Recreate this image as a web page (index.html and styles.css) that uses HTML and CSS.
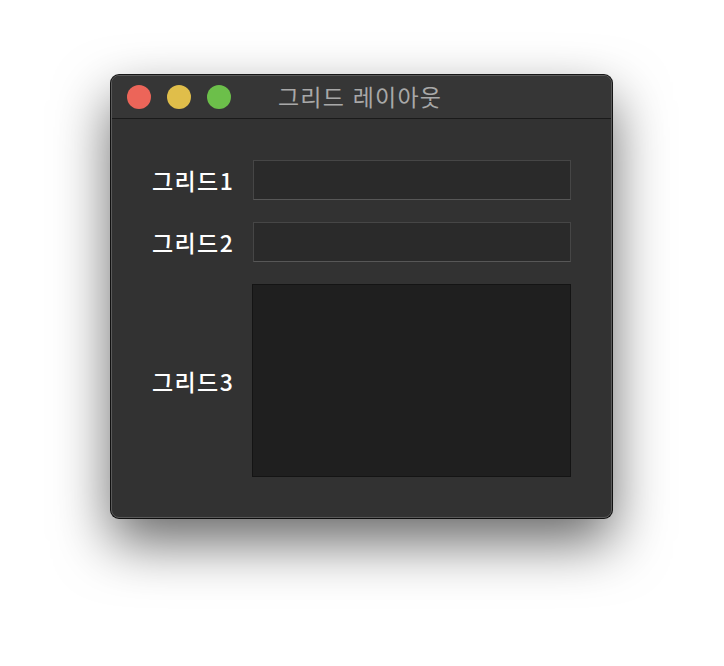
FILE: index.html
```html
<!DOCTYPE html>
<html lang="ko">
<head>
    <meta charset="UTF-8">
    <title>그리드 레이아웃</title>
    <link rel="stylesheet" href="styles.css">
</head>
<body>
    <div class="window">
        <div class="titlebar">
            <div class="lights">
                <span class="light red"></span>
                <span class="light yellow"></span>
                <span class="light green"></span>
            </div>
            <div class="title">그리드 레이아웃</div>
        </div>
        <div class="content">
            <label class="label">그리드1</label>
            <input class="field" type="text">
            <label class="label">그리드2</label>
            <input class="field" type="text">
            <label class="label">그리드3</label>
            <textarea class="area"></textarea>
        </div>
    </div>
</body>
</html>
```

FILE: styles.css
```css
html, body {
    height: 100%;
}

body {
    margin: 0;
    background: #ffffff;
    font-family: "Noto Sans CJK KR", "Noto Sans", sans-serif;
    overflow: hidden;
}

.window {
    margin: 75px 0 0 111px;
    width: 501px;
    height: 443px;
    box-sizing: border-box;
    background: #323232;
    border: 1px solid #5a5a5a;
    border-radius: 8px;
    box-shadow: 0 24px 55px rgba(0, 0, 0, 0.6), 0 0 0 1px #1a1a1a;
    display: flex;
    flex-direction: column;
    overflow: hidden;
}

.titlebar {
    height: 43px;
    box-sizing: border-box;
    background: #363636;
    border-bottom: 1px solid #1a1a1a;
    display: flex;
    align-items: center;
    position: relative;
}

.lights {
    display: flex;
    gap: 16px;
    padding-left: 15px;
}

.light {
    width: 24px;
    height: 24px;
    border-radius: 50%;
}

.red { background: #ec6559; }
.yellow { background: #e0be4a; }
.green { background: #6cbf4a; }

.title {
    position: absolute;
    left: 166px;
    top: 5px;
    color: #a8a8a8;
    font-size: 23px;
    letter-spacing: 1.2px;
    line-height: 30px;
}

.content {
    flex: 1;
    display: grid;
    grid-template-columns: auto 1fr;
    grid-template-rows: 40px 40px 1fr;
    column-gap: 19px;
    row-gap: 22px;
    padding: 41px 40px 40px 40px;
    align-items: center;
}

.label {
    color: #ffffff;
    font-size: 23px;
    font-weight: 500;
    letter-spacing: 1.4px;
    line-height: 30px;
}

.field {
    height: 40px;
    box-sizing: border-box;
    background: #2a2a2a;
    border: 1px solid #464646;
    border-bottom-color: #575757;
    outline: none;
    margin: 0;
}

.area {
    align-self: stretch;
    margin: 0 0 0 -1px;
    resize: none;
    background: #1f1f1f;
    border: 1px solid #141414;
    outline: none;
}
```
